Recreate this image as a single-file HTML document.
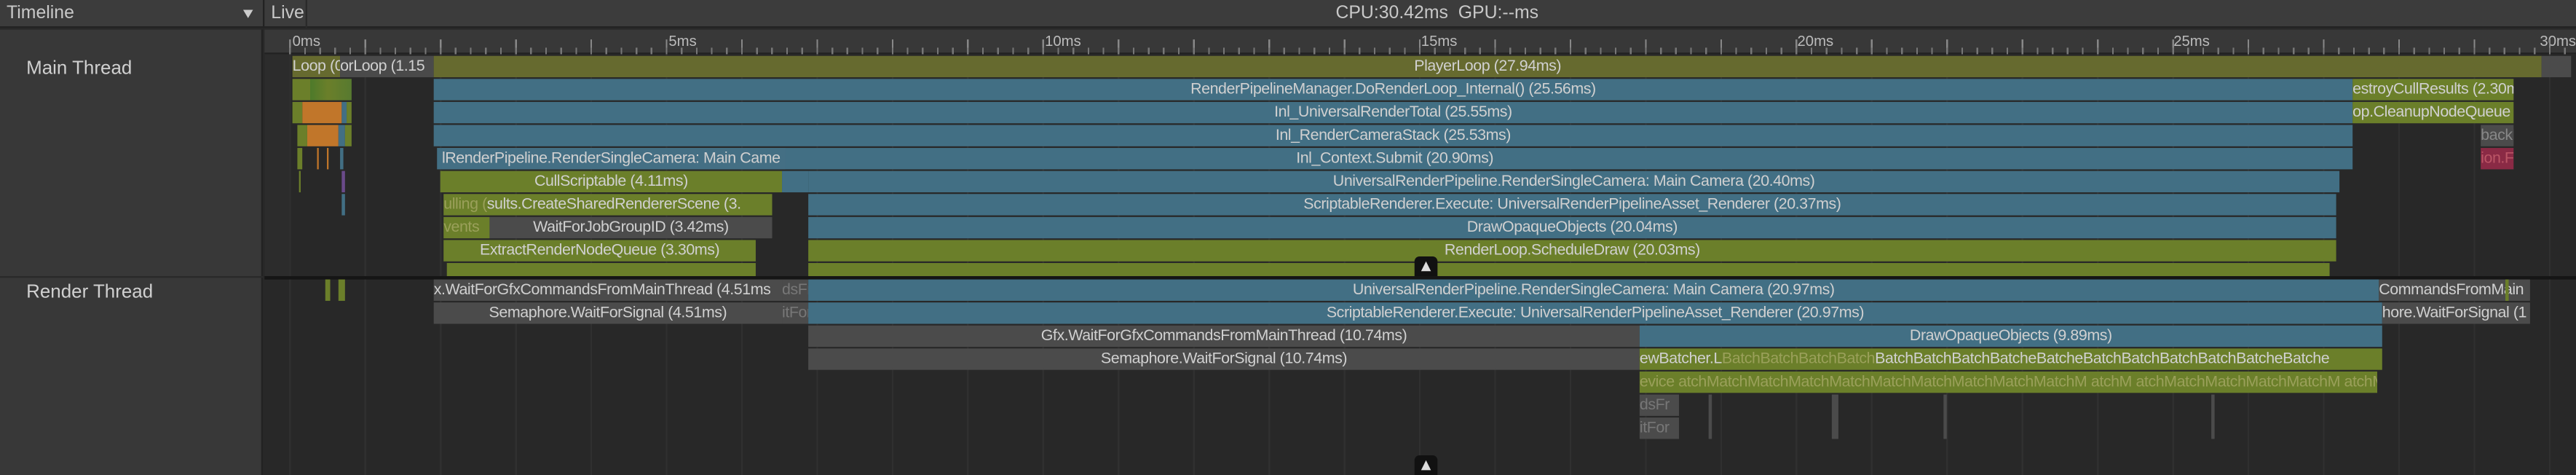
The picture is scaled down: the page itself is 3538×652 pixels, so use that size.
<!DOCTYPE html>
<html><head><meta charset="utf-8"><style>
*{margin:0;padding:0;box-sizing:border-box}
html,body{width:3538px;height:652px;overflow:hidden;background:#282828}
#w{position:absolute;left:0;top:0;width:1568px;height:289px;transform:scale(2.2564);transform-origin:0 0;font-family:"Liberation Sans",sans-serif;color:#c8c8c8;background:#282828}
.a{position:absolute}
.b{position:absolute;height:13px;overflow:hidden;white-space:nowrap;text-align:center;font-size:9.5px;line-height:13px;color:#d0d0d0;letter-spacing:-0.2px}
.o{background:#666a2f}.bl{background:#426f84}.g{background:#6b7f2a}.gr{background:#4b4b4b}.or{background:#c1762a}.r{background:#8a2a45}
.dim{color:#9aa05a}
.tl{position:absolute;top:20px;font-size:9px;color:#bbb}
.btn{position:absolute;width:14px;height:12px;background:#111;border-radius:3px 3px 0 0}
.btn:after{content:"";position:absolute;left:4px;top:3px;border-left:3px solid transparent;border-right:3px solid transparent;border-bottom:6px solid #ddd}
</style></head><body><div id="w">
<div class="a" style="left:0;top:0;width:1568px;height:17px;background:#3c3c3c;border-bottom:1px solid #222"></div>
<div class="a" style="left:4px;top:2px;font-size:11px">Timeline</div>
<div class="a" style="left:148px;top:6px;border-left:3px solid transparent;border-right:3px solid transparent;border-top:5px solid #ccc"></div>
<div class="a" style="left:160px;top:0;width:1px;height:17px;background:#222"></div>
<div class="a" style="left:165px;top:2px;font-size:11px">Live</div>
<div class="a" style="left:186px;top:0;width:1px;height:17px;background:#2a2a2a"></div>
<div class="a" style="left:813px;top:2px;font-size:11px">CPU:30.42ms&nbsp;&nbsp;GPU:--ms</div>
<div class="a" style="left:0;top:18px;width:160px;height:271px;background:#383838;border-right:1px solid #222"></div>
<div class="a" style="left:16px;top:36px;font-size:11.5px;color:#d0d0d0">Main Thread</div>
<div class="a" style="left:16px;top:172px;font-size:11.5px;color:#d0d0d0">Render Thread</div>
<div class="a" style="left:0;top:168px;width:160px;height:1px;background:#2a2a2a"></div>
<div class="a" style="left:161px;top:18px;width:1407px;height:15px;background:#383838;border-bottom:1px solid #222"></div>
<div class="a" style="left:176px;top:33px;width:1392px;height:256px;background:repeating-linear-gradient(90deg,#303030 0,#303030 1px,transparent 1px,transparent 45.85px)"></div>
<div class="a" style="left:161px;top:33px;width:15px;height:135px;background:#2c2c2c"></div>
<div class="tl" style="left:178px">0ms</div><div class="tl" style="left:407px">5ms</div><div class="tl" style="left:636px">10ms</div><div class="tl" style="left:865px">15ms</div><div class="tl" style="left:1094px">20ms</div><div class="tl" style="left:1323px">25ms</div><div class="tl" style="left:1546px">30ms</div>
<div class="a" style="left:176px;top:24px;width:1392px;height:9px;background:repeating-linear-gradient(90deg,#888 0,#888 1px,transparent 1px,transparent 45.85px)"></div>
<div class="a" style="left:176px;top:29px;width:1392px;height:4px;background:repeating-linear-gradient(90deg,#777 0,#777 1px,transparent 1px,transparent 9.17px)"></div>
<div class="b o" style="left:178px;top:34px;width:29px;text-align:left">Loop (0.</div>
<div class="b gr" style="left:207px;top:34px;width:57px;text-align:left;background:#4a4a4a">orLoop (1.15</div>
<div class="b o" style="left:264px;top:34px;width:1283px">PlayerLoop (27.94ms)</div>
<div class="b gr" style="left:1547px;top:34px;width:18px"></div>
<div class="a" style="left:178px;top:48px;width:36px;height:13px;background:linear-gradient(90deg,#6b7f2a 0,#6b7f2a 30%,#4d7a2a 30%,#6b7f2a 60%,#577a30 100%)"></div>
<div class="a or" style="left:184px;top:62px;width:24px;height:13px"></div><div class="a g" style="left:178px;top:62px;width:6px;height:13px"></div><div class="a bl" style="left:208px;top:62px;width:3px;height:13px"></div><div class="a g" style="left:211px;top:62px;width:3px;height:13px"></div>
<div class="a or" style="left:187px;top:76px;width:19px;height:13px"></div><div class="a g" style="left:181px;top:76px;width:6px;height:13px"></div><div class="a bl" style="left:206px;top:76px;width:4px;height:13px"></div><div class="a g" style="left:210px;top:76px;width:4px;height:13px"></div>
<div class="a g" style="left:181px;top:90px;width:3px;height:13px"></div><div class="a or" style="left:193px;top:90px;width:1px;height:13px"></div><div class="a or" style="left:199px;top:90px;width:1px;height:13px"></div><div class="a bl" style="left:207px;top:90px;width:2px;height:13px"></div>
<div class="a g" style="left:182px;top:104px;width:1px;height:13px"></div><div class="a" style="left:208px;top:104px;width:2px;height:13px;background:#6a4a8a"></div>
<div class="a bl" style="left:208px;top:118px;width:2px;height:13px"></div>
<div class="b bl" style="left:264px;top:48px;width:1168px">RenderPipelineManager.DoRenderLoop_Internal() (25.56ms)</div>
<div class="b g" style="left:1432px;top:48px;width:98px;text-align:left">estroyCullResults (2.30m</div>
<div class="b bl" style="left:264px;top:62px;width:1168px">Inl_UniversalRenderTotal (25.55ms)</div>
<div class="b g" style="left:1432px;top:62px;width:98px;text-align:left">op.CleanupNodeQueue</div>
<div class="b bl" style="left:264px;top:76px;width:1168px">Inl_RenderCameraStack (25.53ms)</div>
<div class="b gr" style="left:1510px;top:76px;width:20px;color:#888;text-align:left">backD</div>
<div class="b bl" style="left:266px;top:90px;width:1166px">Inl_Context.Submit (20.90ms)</div>
<div class="b bl" style="left:269px;top:90px;width:209px;text-align:left;background:#446f84">lRenderPipeline.RenderSingleCamera: Main Came</div>
<div class="b r" style="left:1510px;top:90px;width:20px;color:#b56;text-align:left">ion.Fr</div>
<div class="b g" style="left:268px;top:104px;width:208px">CullScriptable (4.11ms)</div>
<div class="b bl" style="left:476px;top:104px;width:16px"></div>
<div class="b bl" style="left:492px;top:104px;width:932px">UniversalRenderPipeline.RenderSingleCamera: Main Camera (20.40ms)</div>
<div class="b g" style="left:270px;top:118px;width:200px;text-align:left"><span class="dim">ulling (</span>sults.CreateSharedRendererScene (3.</div>
<div class="b bl" style="left:492px;top:118px;width:930px">ScriptableRenderer.Execute: UniversalRenderPipelineAsset_Renderer (20.37ms)</div>
<div class="b g" style="left:270px;top:132px;width:28px;text-align:left"><span class="dim">vents</span></div>
<div class="b gr" style="left:298px;top:132px;width:172px">WaitForJobGroupID (3.42ms)</div>
<div class="b bl" style="left:492px;top:132px;width:930px">DrawOpaqueObjects (20.04ms)</div>
<div class="b g" style="left:270px;top:146px;width:190px">ExtractRenderNodeQueue (3.30ms)</div>
<div class="b g" style="left:492px;top:146px;width:930px">RenderLoop.ScheduleDraw (20.03ms)</div>
<div class="b g" style="left:272px;top:160px;width:188px;height:8px"></div>
<div class="b g" style="left:492px;top:160px;width:926px;height:8px"></div>
<div class="a" style="left:161px;top:168px;width:1407px;height:2px;background:#151515"></div>
<div class="btn" style="left:861px;top:156px"></div>
<div class="a g" style="left:198px;top:170px;width:3px;height:13px"></div><div class="a g" style="left:206px;top:170px;width:4px;height:13px"></div>
<div class="b gr" style="left:264px;top:170px;width:212px;text-align:left">x.WaitForGfxCommandsFromMainThread (4.51ms</div>
<div class="b gr" style="left:476px;top:170px;width:16px;color:#777">dsFr</div>
<div class="b bl" style="left:492px;top:170px;width:956px">UniversalRenderPipeline.RenderSingleCamera: Main Camera (20.97ms)</div>
<div class="b gr" style="left:1448px;top:170px;width:92px;text-align:left">CommandsFromMain</div>
<div class="b gr" style="left:264px;top:184px;width:212px">Semaphore.WaitForSignal (4.51ms)</div>
<div class="b gr" style="left:476px;top:184px;width:16px;color:#777">itFor</div>
<div class="b bl" style="left:492px;top:184px;width:958px">ScriptableRenderer.Execute: UniversalRenderPipelineAsset_Renderer (20.97ms)</div>
<div class="b gr" style="left:1450px;top:184px;width:90px;text-align:left">hore.WaitForSignal (1</div>
<div class="b gr" style="left:492px;top:198px;width:506px">Gfx.WaitForGfxCommandsFromMainThread (10.74ms)</div>
<div class="b bl" style="left:998px;top:198px;width:452px">DrawOpaqueObjects (9.89ms)</div>
<div class="b gr" style="left:492px;top:212px;width:506px">Semaphore.WaitForSignal (10.74ms)</div>
<div class="b g" style="left:998px;top:212px;width:452px;text-align:left">ewBatcher.L<span class="dim">BatchBatchBatchBatch</span>BatchBatchBatchBatcheBatcheBatchBatchBatchBatchBatcheBatche</div>
<div class="b g" style="left:998px;top:226px;width:449px;text-align:left"><span class="dim">evice atchMatchMatchMatchMatchMatchMatchMatchMatchMatchM atchM atchMatchMatchMatchMatchM atchMatchM</span></div>
<div class="b gr" style="left:998px;top:240px;width:24px;color:#777;text-align:left">dsFr</div>
<div class="b gr" style="left:998px;top:254px;width:24px;color:#777;text-align:left">itFor</div>
<div class="a gr" style="left:1040px;top:240px;width:2px;height:27px"></div>
<div class="a gr" style="left:1115px;top:240px;width:4px;height:27px"></div>
<div class="a gr" style="left:1183px;top:240px;width:2px;height:27px"></div>
<div class="a gr" style="left:1346px;top:240px;width:2px;height:27px"></div>
<div class="a g" style="left:1525px;top:170px;width:2px;height:13px"></div>
<div class="btn" style="left:861px;top:277px"></div>
</div></body></html>
